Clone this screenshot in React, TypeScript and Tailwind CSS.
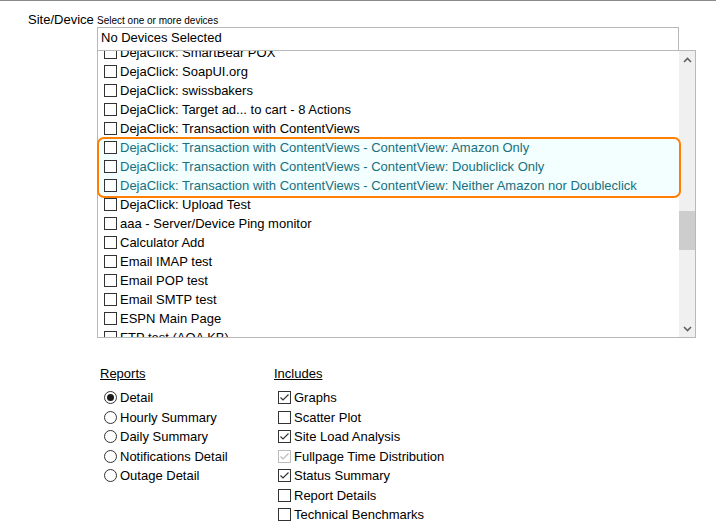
import React from "react"

const devices = [
  "DejaClick: SmartBear POX",
  "DejaClick: SoapUI.org",
  "DejaClick: swissbakers",
  "DejaClick: Target ad... to cart - 8 Actions",
  "DejaClick: Transaction with ContentViews",
  "DejaClick: Transaction with ContentViews - ContentView: Amazon Only",
  "DejaClick: Transaction with ContentViews - ContentView: Doubliclick Only",
  "DejaClick: Transaction with ContentViews - ContentView: Neither Amazon nor Doubleclick",
  "DejaClick: Upload Test",
  "aaa - Server/Device Ping monitor",
  "Calculator Add",
  "Email IMAP test",
  "Email POP test",
  "Email SMTP test",
  "ESPN Main Page",
  "FTP test (AOA KB)",
]

const reports = ["Detail", "Hourly Summary", "Daily Summary", "Notifications Detail", "Outage Detail"]

const includes: { label: string; checked: boolean; disabled?: boolean }[] = [
  { label: "Graphs", checked: true },
  { label: "Scatter Plot", checked: false },
  { label: "Site Load Analysis", checked: true },
  { label: "Fullpage Time Distribution", checked: true, disabled: true },
  { label: "Status Summary", checked: true },
  { label: "Report Details", checked: false },
  { label: "Technical Benchmarks", checked: false },
]

const Box = ({ checked = false, disabled = false }: { checked?: boolean; disabled?: boolean }) => (
  <span
    className={
      "flex h-[13px] w-[13px] shrink-0 items-center justify-center border bg-white " +
      (disabled ? "border-[#bcbcbc]" : "border-[#333]")
    }
  >
    {checked && (
      <svg width="11" height="11" viewBox="0 0 11 11">
        <path d="M1.5 5.5 L4 8 L9.5 2.5" fill="none" stroke={disabled ? "#bcbcbc" : "#333"} strokeWidth="1.2" />
      </svg>
    )}
  </span>
)

const Radio = ({ on = false }: { on?: boolean }) => (
  <span className="flex h-[13px] w-[13px] shrink-0 items-center justify-center rounded-full border border-[#333] bg-white">
    {on && <span className="h-[7px] w-[7px] rounded-full bg-[#1a1a1a]" />}
  </span>
)

export default function App() {
  return (
    <div className="relative h-[530px] w-[716px] overflow-hidden border-t border-[#8a8a8a] bg-white font-['Liberation_Sans',Arial,sans-serif] text-[13px] text-black">
      {/* site/device picker */}
      <div className="flex items-end pl-[28px] pt-[11px]">
        <span className="w-[69px] leading-[15px]">Site/Device</span>
        <span className="text-[10px] leading-[12px]">Select one or more devices</span>
      </div>
      <div className="ml-[97px] w-[582px]">
        <div className="h-[23px] border border-b-0 border-[#b8b8b8] pl-[3px] pt-[2px] leading-[15px]">No Devices Selected</div>
      </div>
      <div className="relative ml-[97px] flex h-[288px] w-[599px] border border-[#b8b8b8]">
        <div className="flex-1 overflow-hidden">
          <div className="-mt-[8px]">
            {devices.map((d, i) => {
              const hl = i >= 5 && i <= 7
              return (
                <div
                  key={d}
                  className={
                    "flex h-[19px] items-center gap-[3px] pl-[6px] " +
                    (hl ? "bg-[#f3fefe] text-[#17707f]" : "")
                  }
                >
                  <Box />
                  <span className="whitespace-nowrap">{d}</span>
                </div>
              )
            })}
          </div>
        </div>
        {/* scrollbar */}
        <div className="flex w-[16px] flex-col bg-[#f0f0f0]">
          <div className="flex h-[17px] items-center justify-center">
            <svg width="9" height="6" viewBox="0 0 9 6">
              <path d="M1 5 L4.5 1.5 L8 5" fill="none" stroke="#606060" strokeWidth="1.6" />
            </svg>
          </div>
          <div className="h-[143px]" />
          <div className="h-[39px] bg-[#cdcdcd]" />
          <div className="flex-1" />
          <div className="flex h-[17px] items-center justify-center">
            <svg width="9" height="6" viewBox="0 0 9 6">
              <path d="M1 1 L4.5 4.5 L8 1" fill="none" stroke="#606060" strokeWidth="1.6" />
            </svg>
          </div>
        </div>
        {/* highlight annotation */}
        <div className="pointer-events-none absolute left-[-1px] top-[86px] h-[61px] w-[584px] rounded-[7px] border-[2.5px] border-[#ff8000]" />
      </div>

      {/* report options */}
      <div className="mt-[28px] flex">
        <div className="ml-[100px] w-[174px]">
          <div className="mb-[7px] leading-[15px] underline">Reports</div>
          {reports.map((r, i) => (
            <div key={r} className="flex h-[19.5px] items-center gap-[3px] pl-[4px]">
              <Radio on={i === 0} />
              <span>{r}</span>
            </div>
          ))}
        </div>
        <div>
          <div className="mb-[7px] leading-[15px] underline">Includes</div>
          {includes.map((c) => (
            <div key={c.label} className="flex h-[19.5px] items-center gap-[3px] pl-[4px]">
              <Box checked={c.checked} disabled={c.disabled} />
              <span>{c.label}</span>
            </div>
          ))}
        </div>
      </div>
    </div>
  )
}
